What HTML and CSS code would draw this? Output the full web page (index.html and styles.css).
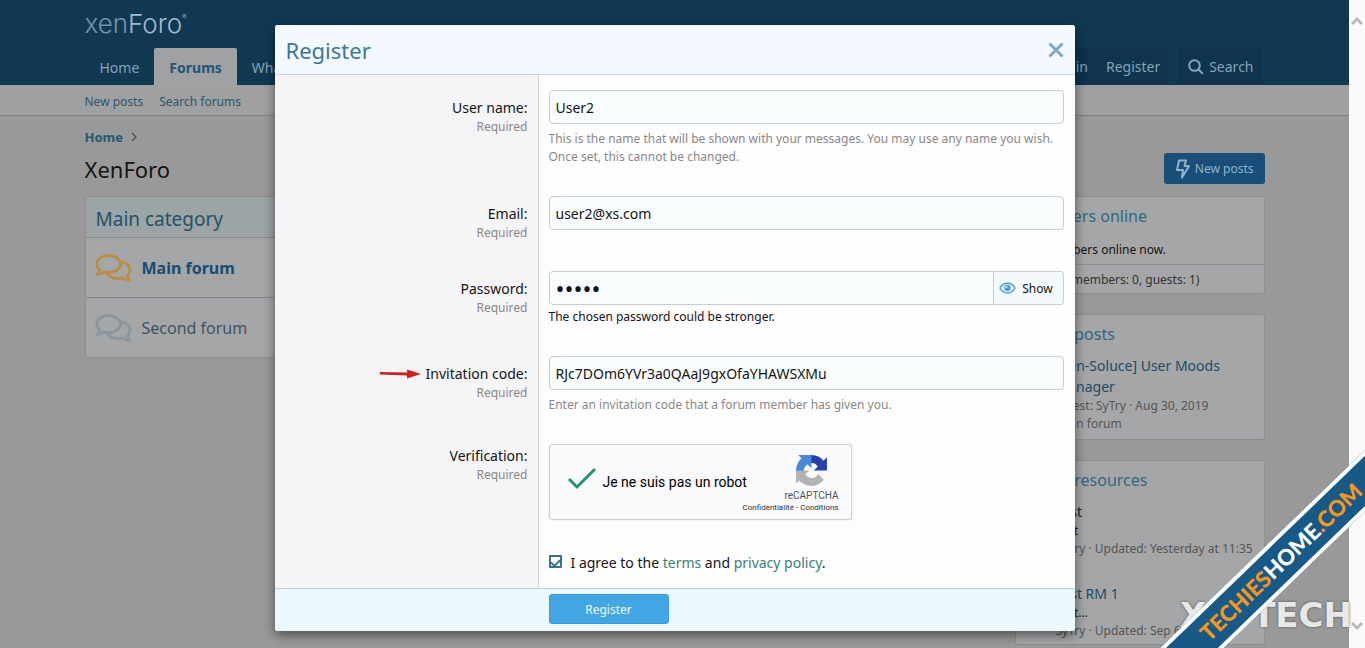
FILE: index.html
```html
<!DOCTYPE html>
<html lang="en">
<head>
    <meta charset="UTF-8">
    <meta name="viewport" content="width=device-width, initial-scale=1.0">
    <title>XenForo - Register</title>
    <link rel="stylesheet" href="styles.css">
</head>
<body>
    <div class="page">
        <header class="header">
            <div class="inner">
                <a class="logo" href="#"><span>xen</span>Foro<sup>®</sup></a>
                <nav class="nav">
                    <a class="tab" href="#">Home</a>
                    <a class="tab active" href="#">Forums</a>
                    <a class="tab" href="#">What's new</a>
                    <div class="account">
                        <div class="account-group">
                            <a href="#">Log in</a>
                            <a href="#">Register</a>
                        </div>
                        <div class="account-group">
                            <a href="#">
                                <svg width="16" height="16" viewBox="0 0 16 16" fill="none" stroke="currentColor" stroke-width="2"><circle cx="6.5" cy="6.5" r="5.3"/><path d="M10.5 10.5L15 15"/></svg>
                                Search
                            </a>
                        </div>
                    </div>
                </nav>
            </div>
        </header>
        <div class="subnav">
            <div class="inner">
                <a href="#">New posts</a>
                <a href="#">Search forums</a>
            </div>
        </div>
        <main class="inner">
            <div class="breadcrumb">
                <a href="#">Home</a>
                <svg width="6" height="10" viewBox="0 0 6 10" fill="none" stroke="currentColor" stroke-width="1.5"><path d="M1 1l4 4-4 4"/></svg>
            </div>
            <div class="title-row">
                <h1>XenForo</h1>
                <button class="new-posts" type="button">
                    <svg width="16" height="20" viewBox="0 0 16 20" fill="none" stroke="currentColor" stroke-width="2" stroke-linejoin="round"><path d="M4 1.5h7L9.5 7H14L7 18.5 8 11H2z"/></svg>
                    New posts
                </button>
            </div>
            <div class="columns">
                <section class="category">
                    <h2>Main category</h2>
                    <div class="forum unread">
                        <svg class="comments" viewBox="0 0 576 512" fill="currentColor"><path d="M532 386c27-27 44-61 44-98 0-80-76-147-176-158C368 73 294 32 208 32 93 32 0 104 0 192c0 37 17 71 44 98-15 31-37 54-38 55-6 6-8 16-4 24s11 13 20 13c54 0 97-20 124-37 8 2 17 4 26 5 32 57 105 98 192 98 21 0 41-2 60-7 27 17 70 37 124 37 9 0 17-5 20-13s2-17-4-24c0 0-23-23-32-55zM142 294l-20 13c-17 10-34 18-51 23 3-6 6-11 9-17l16-31-25-25c-14-13-30-36-30-65 0-61 77-112 168-112s168 51 168 112-77 112-168 112c-17 0-35-2-52-6zm363 59l-25 25 16 31c3 6 6 11 9 17-17-5-35-13-51-23l-20-13-23 6c-17 4-34 6-51 6-57 0-108-20-138-50 113-4 203-75 203-160 0-4 0-8-1-12 60 15 104 54 104 108 0 29-16 52-23 65z"/></svg>
                        <a href="#">Main forum</a>
                    </div>
                    <div class="forum">
                        <svg class="comments" viewBox="0 0 576 512" fill="currentColor"><path d="M532 386c27-27 44-61 44-98 0-80-76-147-176-158C368 73 294 32 208 32 93 32 0 104 0 192c0 37 17 71 44 98-15 31-37 54-38 55-6 6-8 16-4 24s11 13 20 13c54 0 97-20 124-37 8 2 17 4 26 5 32 57 105 98 192 98 21 0 41-2 60-7 27 17 70 37 124 37 9 0 17-5 20-13s2-17-4-24c0 0-23-23-32-55zM142 294l-20 13c-17 10-34 18-51 23 3-6 6-11 9-17l16-31-25-25c-14-13-30-36-30-65 0-61 77-112 168-112s168 51 168 112-77 112-168 112c-17 0-35-2-52-6zm363 59l-25 25 16 31c3 6 6 11 9 17-17-5-35-13-51-23l-20-13-23 6c-17 4-34 6-51 6-57 0-108-20-138-50 113-4 203-75 203-160 0-4 0-8-1-12 60 15 104 54 104 108 0 29-16 52-23 65z"/></svg>
                        <a href="#">Second forum</a>
                    </div>
                </section>
                <aside class="sidebar">
                    <section class="block">
                        <h3>Members online</h3>
                        <p class="block-text">No members online now.</p>
                        <p class="block-footer">Total: 1 (members: 0, guests: 1)</p>
                    </section>
                    <section class="block">
                        <h3>Latest posts</h3>
                        <div class="item">
                            <a href="#">[Xen-Soluce] User Moods Manager</a>
                            <p>Latest: SyTry · Aug 30, 2019</p>
                            <p>Main forum</p>
                        </div>
                    </section>
                    <section class="block resources">
                        <h3>Latest resources</h3>
                        <div class="item">
                            <a class="dark" href="#">Test</a>
                            <p class="dark">Test</p>
                            <p>SyTry · Updated: Yesterday at 11:35</p>
                        </div>
                        <div class="item">
                            <a href="#">Test RM 1</a>
                            <p class="dark">Test...</p>
                            <p>SyTry · Updated: Sep 6, 2019</p>
                        </div>
                    </section>
                </aside>
            </div>
        </main>

        <div class="overlay">
            <form class="modal">
                <div class="modal-header">
                    <h2>Register</h2>
                    <button class="close" type="button" aria-label="Close">
                        <svg width="16" height="16" viewBox="0 0 16 16" fill="none" stroke="currentColor" stroke-width="3"><path d="M1.500 1.500l13 13M14.500 1.500l-13 13"/></svg>
                    </button>
                </div>
                <div class="row">
                    <div class="label"><label for="username">User name:</label><small>Required</small></div>
                    <div class="field">
                        <input class="input" type="text" id="username" value="User2">
                        <p class="hint">This is the name that will be shown with your messages. You may use any name you wish. Once set, this cannot be changed.</p>
                    </div>
                </div>
                <div class="row">
                    <div class="label"><label for="email">Email:</label><small>Required</small></div>
                    <div class="field">
                        <input class="input" type="email" id="email" value="user2@xs.com">
                    </div>
                </div>
                <div class="row">
                    <div class="label"><label for="password">Password:</label><small>Required</small></div>
                    <div class="field">
                        <div class="input-group">
                            <input class="input" type="password" id="password" value="user2">
                            <button class="show" type="button">
                                <svg width="17" height="12" viewBox="0 0 17 12"><path d="M1 6c3.500-6.500 11.500-6.500 15 0-3.500 6.500-11.500 6.500-15 0z" fill="none" stroke="currentColor" stroke-width="1.500"/><circle cx="8.500" cy="6" r="3.200" fill="currentColor"/><circle cx="7.500" cy="5" r="1" fill="#d9eefa"/></svg>
                                Show
                            </button>
                        </div>
                        <p class="strength">The chosen password could be stronger.</p>
                    </div>
                </div>
                <div class="row">
                    <div class="label">
                        <div class="pointed">
                            <svg width="42" height="10" viewBox="0 0 42 10"><path d="M1 3L28 3.500V.5L42 5 28 9.500V6.500L1 5.500z" fill="#c9241c"/></svg>
                            <label for="invitation">Invitation code:</label>
                        </div>
                        <small>Required</small>
                    </div>
                    <div class="field">
                        <input class="input" type="text" id="invitation" value="RJc7DOm6YVr3a0QAaJ9gxOfaYHAWSXMu">
                        <p class="hint">Enter an invitation code that a forum member has given you.</p>
                    </div>
                </div>
                <div class="row">
                    <div class="label verification"><span>Verification:</span><small>Required</small></div>
                    <div class="field">
                        <div class="captcha">
                            <svg width="30" height="24" viewBox="0 0 30 24" fill="none" stroke="#23936b" stroke-width="3"><path d="M2 12l8 8L28 2"/></svg>
                            <span class="captcha-text">Je ne suis pas un robot</span>
                            <div class="captcha-brand">
                                <svg width="31" height="31" viewBox="0 0 64 64"><path fill="#2541a8" d="M64 31.955l-.033-1.370V4.687l-7.160 7.160C50.948 4.674 42.033.093 32.050.093c-10.400 0-19.622 4.960-25.458 12.640l11.736 11.860a15.550 15.550 0 0 1 4.754-5.334c2.050-1.600 4.952-2.906 8.968-2.906.485 0 .86.057 1.135.163 4.976.393 9.288 3.140 11.828 7.124l-8.307 8.307L64 31.953"/><path fill="#4688dc" d="M31.862.094l-1.370.033H4.594l7.160 7.160C4.580 13.147 0 22.060 0 32.046c0 10.400 4.960 19.622 12.640 25.458L24.500 45.768a15.550 15.550 0 0 1-5.334-4.754c-1.600-2.050-2.906-4.952-2.906-8.968 0-.485.057-.86.163-1.135.393-4.976 3.140-9.288 7.124-11.828l8.307 8.307L31.860.095"/><path fill="#b3b3b5" d="M.001 32.045l.033 1.370v25.898l7.160-7.160c5.860 7.173 14.774 11.754 24.760 11.754 10.400 0 19.622-4.960 25.458-12.640l-11.736-11.860a15.550 15.550 0 0 1-4.754 5.334c-2.050 1.600-4.952 2.906-8.968 2.906-.485 0-.86-.057-1.135-.163-4.976-.393-9.288-3.140-11.828-7.124l8.307-8.307c-10.522.04-22.400.066-27.295-.005"/></svg>
                                <span class="captcha-name">reCAPTCHA</span>
                                <span class="captcha-links"><a href="#">Confidentialité</a> - <a href="#">Conditions</a></span>
                            </div>
                        </div>
                    </div>
                </div>
                <div class="row">
                    <div class="label"></div>
                    <div class="field agree">
                        <input type="checkbox" id="agree" checked>
                        <label for="agree">I agree to the <a href="#">terms</a> and <a href="#">privacy policy</a>.</label>
                    </div>
                </div>
                <div class="modal-footer">
                    <button class="submit" type="submit">Register</button>
                </div>
            </form>
        </div>
    </div>
    <div class="scrollbar">
        <svg width="12" height="10" viewBox="0 0 12 10" fill="none" stroke="#b9b9b9" stroke-width="3"><path d="M1 8l5-5 5 5"/></svg>
        <svg width="12" height="10" viewBox="0 0 12 10" fill="none" stroke="#b9b9b9" stroke-width="3"><path d="M1 2l5 5 5-5"/></svg>
    </div>
    <div class="watermark"><span>X</span><span>TECH</span></div>
    <div class="ribbon-corner">
        <div class="ribbon">TECHIES<span>HOME</span>.COM</div>
    </div>
</body>
</html>
```
FILE: styles.css
```css
* {
    box-sizing: border-box;
}
body {
    margin: 0;
    height: 100vh;
    display: flex;
    position: relative;
    overflow: hidden;
    font-family: "Noto Sans", "Open Sans", sans-serif;
    font-size: 14px;
    line-height: 20px;
    color: #141414;
    background: #9a999a;
}
h1, h2, h3, p {
    margin: 0;
    font-weight: 400;
}
a {
    color: inherit;
    text-decoration: none;
}
button, input {
    font-family: inherit;
    color: inherit;
}
.page {
    flex: 1;
    position: relative;
    overflow: hidden;
}
.inner {
    max-width: 1200px;
    margin: 0 auto;
    padding: 0 10px;
}

/* header */
.header {
    background: #113853;
    color: #83a3b9;
}
.logo {
    display: flex;
    height: 48px;
    align-items: center;
    font-family: Inter, sans-serif;
    font-size: 26px;
    font-weight: 300;
    color: #a3bac8;
}
.logo span {
    color: #7394aa;
}
.logo sup {
    font-size: 7px;
    align-self: flex-start;
    margin-top: 8px;
}
.nav {
    display: flex;
    height: 37px;
}
.tab {
    padding: 10px 15px 0;
}
.tab.active {
    background: #9fa1a2;
    color: #20567b;
    font-weight: 700;
    border-radius: 2px 2px 0 0;
}
.account {
    display: flex;
    gap: 10px;
    margin-left: auto;
    padding-right: 3px;
}
.account-group {
    display: flex;
    background: #10334e;
}
.account-group a {
    display: flex;
    align-items: center;
    gap: 5px;
    padding: 0 8px 0 10px;
}
.subnav {
    background: #9fa09f;
    border-bottom: 1px solid #7e8184;
    color: #2b5670;
    font-size: 12px;
}
.subnav .inner {
    display: flex;
    gap: 16px;
    height: 30px;
    align-items: center;
    padding-top: 4px;
}

/* forum list */
.breadcrumb {
    display: flex;
    align-items: center;
    gap: 8px;
    padding-top: 11px;
    font-size: 13px;
    font-weight: 700;
    color: #23596f;
}
.breadcrumb svg {
    color: #555;
}
.title-row {
    display: flex;
    justify-content: space-between;
    align-items: center;
    margin: 6px 0 12px;
}
h1 {
    font-size: 22px;
    line-height: 30px;
}
.new-posts {
    display: flex;
    align-items: center;
    gap: 4px;
    height: 31px;
    padding: 0 11px;
    border: 0;
    border-radius: 3px;
    background: #184e77;
    color: #8fb4ca;
    font-size: 12px;
}
.columns {
    display: grid;
    grid-template-columns: 1fr 250px;
    gap: 20px;
    align-items: start;
}
.category, .block {
    background: #a5a6a7;
    border: 1px solid #8b8e92;
    border-radius: 3px;
}
.category h2 {
    padding: 8px 10px 4px;
    font-size: 19px;
    line-height: 28px;
    color: #235268;
    background: #9ca4a6;
}
.forum {
    display: flex;
    align-items: center;
    gap: 10px;
    height: 60px;
    padding: 0 9px;
    border-top: 1px solid #85898d;
    font-size: 16px;
    color: #3d5365;
}
.forum .comments {
    width: 37px;
    height: 32px;
    color: #8a959e;
}
.forum.unread {
    font-weight: 700;
    color: #184c72;
}
.forum.unread .comments {
    color: #bb8c45;
}

/* sidebar */
.sidebar {
    display: grid;
    gap: 20px;
    font-size: 12px;
}
.block h3 {
    padding: 7px 9px 3px;
    font-size: 16px;
    line-height: 24px;
    color: #326784;
}
.block-text {
    padding: 9px 9px 4px;
}
.block-footer {
    padding: 5px 9px 3px;
    border-top: 1px solid #8b8e92;
    color: #333;
}
.item {
    padding: 6px 9px 6px 40px;
    line-height: 18px;
    color: #555;
}
.item a {
    display: block;
    font-size: 14px;
    line-height: 21px;
    color: #204c67;
}
.item .dark {
    color: #222;
}
.resources .item {
    padding-bottom: 19px;
}
.resources .item:last-child {
    padding-bottom: 4px;
}

/* register dialog */
.overlay {
    position: absolute;
    inset: 0;
    padding-top: 25px;
}
.modal {
    max-width: 800px;
    margin: 0 auto;
    background: #fefdfe;
    border-radius: 3px;
    overflow: hidden;
    box-shadow: 0 4px 12px rgba(0, 0, 0, 0.5);
}
.modal-header {
    display: flex;
    justify-content: space-between;
    align-items: center;
    height: 50px;
    padding: 0 11px;
    border-bottom: 1px solid #c3d6e4;
    background: #f3f9fe;
    color: #3b7893;
}
.modal-header h2 {
    font-size: 22px;
    line-height: 30px;
}
.close {
    display: flex;
    padding: 0;
    border: 0;
    background: none;
    color: #7fa9be;
}
.row {
    display: grid;
    grid-template-columns: 33% 1fr;
}
.label {
    padding: 23px 10px 14px;
    border-right: 1px solid #d2d3d8;
    background: #f5f4f7;
    text-align: right;
}
.label label, .label span {
    display: block;
}
.label.verification {
    padding-top: 17px;
}
.label small {
    display: block;
    font-size: 12px;
    line-height: 18px;
    color: #888;
}
.pointed {
    display: flex;
    justify-content: flex-end;
    align-items: center;
    gap: 5px;
}
.field {
    padding: 15px 11px 15px 10px;
}
.input {
    display: block;
    width: 100%;
    height: 34px;
    padding: 0 6px;
    border: 1px solid #c5ced3;
    border-radius: 4px;
    background: #f9fcfd;
    font-size: 14px;
}
.hint {
    padding-top: 6px;
    font-size: 12px;
    line-height: 18px;
    color: #888;
}
.input-group {
    display: flex;
}
.input-group .input {
    border-radius: 4px 0 0 4px;
    font-size: 24px;
}
.show {
    display: flex;
    align-items: center;
    justify-content: center;
    gap: 6px;
    width: 70px;
    flex: none;
    border: 1px solid #c5ced3;
    border-left: 0;
    border-radius: 0 4px 4px 0;
    background: #f4f9fd;
    padding: 0 4px 0 0;
    font-size: 12px;
}
.show svg {
    color: #47a1cf;
}
.strength {
    padding-top: 3px;
    font-size: 12px;
    line-height: 18px;
}
.captcha {
    display: flex;
    align-items: center;
    width: 303px;
    height: 76px;
    padding: 0 12px 0 17px;
    border: 1px solid #cfcfd2;
    border-radius: 3px;
    background: #faf9fb;
    box-shadow: 0 0 3px rgba(0, 0, 0, 0.1);
    font-family: Roboto, sans-serif;
    color: #000;
}
.captcha > svg {
    margin-bottom: 6px;
}
.captcha-text {
    margin-left: 6px;
    white-space: nowrap;
}
.captcha-brand {
    display: flex;
    flex-direction: column;
    align-items: flex-end;
    width: 0;
    margin-left: auto;
    padding-top: 5px;
    white-space: nowrap;
    color: #555;
}
.captcha-brand svg {
    flex: none;
    margin-right: 12px;
}
.captcha-name {
    margin-top: 4px;
    font-size: 10px;
    line-height: 12px;
}
.captcha-links {
    font-size: 8px;
    line-height: 12px;
    color: #333;
}
.agree {
    display: flex;
    gap: 9px;
    padding-top: 18px;
}
.agree input {
    appearance: none;
    width: 13px;
    height: 13px;
    margin: 2px 0 0;
    border: 2px solid #3d7188;
    border-radius: 1px;
    display: grid;
    place-items: center;
}
.agree input:checked::before {
    content: "";
    width: 7px;
    height: 4px;
    border-left: 2px solid #3d7188;
    border-bottom: 2px solid #3d7188;
    transform: rotate(-45deg);
}
.agree a {
    color: #3b7f78;
}
.modal-footer {
    display: grid;
    grid-template-columns: 33% 1fr;
    border-top: 1px solid #b9cfdc;
    background: #edf7fe;
}
.submit {
    grid-column: 2;
    width: 120px;
    height: 30px;
    margin: 5px 10px 7px;
    border: 1px solid #3a9bdc;
    border-radius: 3px;
    background: #43a6e4;
    color: #eefaff;
    font-size: 12px;
}

/* window edge and overlaid marks */
.scrollbar {
    display: flex;
    flex-direction: column;
    justify-content: space-between;
    align-items: center;
    width: 16px;
    padding: 16px 0 17px;
    background: #fbfafb;
}
.watermark {
    position: absolute;
    right: 13px;
    bottom: 13px;
    width: 172px;
    display: flex;
    justify-content: space-between;
    font-family: "DejaVu Sans", sans-serif;
    font-size: 34px;
    line-height: 40px;
    font-weight: 700;
    color: #e8e8e8;
    text-shadow: 0 0 3px #555;
}
.ribbon-corner {
    position: absolute;
    right: 0;
    bottom: 0;
    width: 220px;
    height: 220px;
    overflow: hidden;
}
.ribbon {
    position: absolute;
    left: -24px;
    top: 112px;
    width: 320px;
    height: 44px;
    border: solid #fff;
    border-width: 4px 0;
    background: #195987;
    transform: rotate(-44deg);
    text-align: center;
    font-family: Lato, sans-serif;
    font-size: 22px;
    line-height: 36px;
    font-weight: 900;
    color: #f7981d;
}
.ribbon span {
    color: #fff;
}
```
